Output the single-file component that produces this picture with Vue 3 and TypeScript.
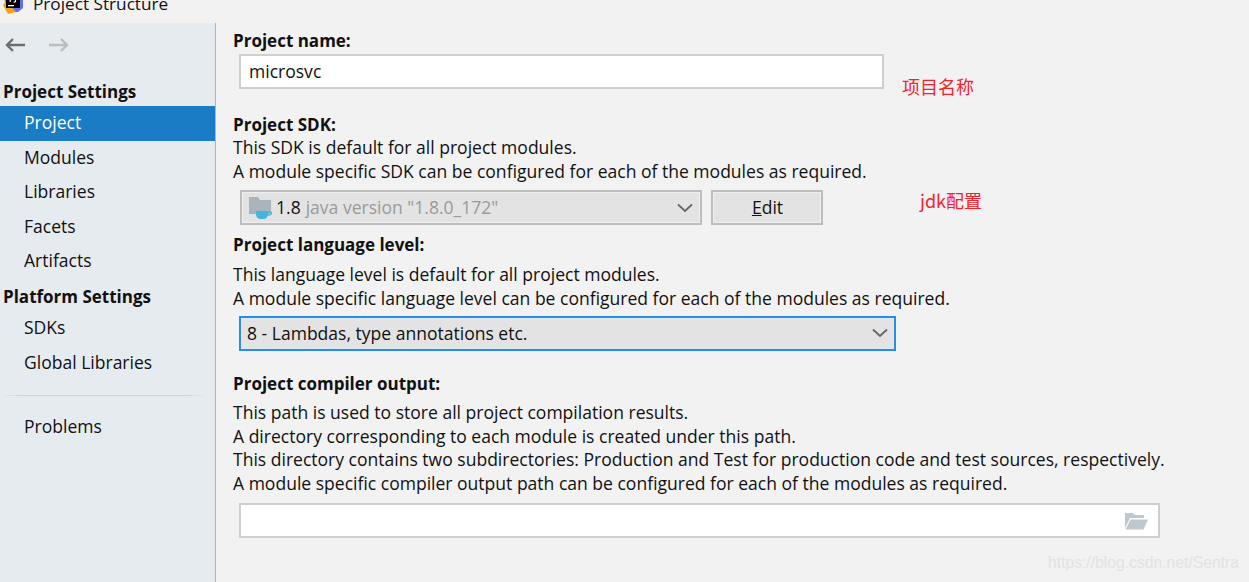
<template>
  <div class="window">
    <header class="titlebar">
      <svg class="app-logo" viewBox="0 0 20 20">
        <path d="M1 2 8 0v14L3 17z" fill="#fc4f8b" />
        <path d="M12 0h8v14l-5 4H8z" fill="#5f6ff0" />
        <path d="M0 11 5 20l8-2L3 7z" fill="#f9a11b" />
        <rect x="3" y="0" width="14" height="14" fill="#000" />
        <rect x="5" y="11" width="6" height="1.300" fill="#fff" />
        <path d="M5.500 2.500h3.500M7.200 2.500v5.500M12.500 2.500v4.500c0 1-1 1.300-2 1" stroke="#fff" stroke-width="1.200" fill="none" />
      </svg>
      <span class="title">Project Structure</span>
    </header>

    <div class="body">
      <aside class="sidebar">
        <div class="nav-arrows">
          <svg viewBox="0 0 22 16" class="arrow">
            <path d="M21 8H3M9 2 3 8l6 6" fill="none" stroke="#6e6e6e" stroke-width="2.400" />
          </svg>
          <svg viewBox="0 0 22 16" class="arrow">
            <path d="M1 8h18M13 2l6 6-6 6" fill="none" stroke="#bdbdbd" stroke-width="2.400" />
          </svg>
        </div>

        <div class="group-title first">Project Settings</div>
        <div
          v-for="item in projectItems"
          :key="item"
          class="nav-item"
          :class="{ active: item === 'Project' }"
        >
          {{ item }}
        </div>

        <div class="group-title">Platform Settings</div>
        <div v-for="item in platformItems" :key="item" class="nav-item">{{ item }}</div>

        <div class="nav-divider"></div>
        <div class="nav-item">Problems</div>
      </aside>

      <main class="content">
        <h3 class="label name-label">Project name:</h3>
        <div class="field name-field">microsvc</div>

        <h3 class="label sdk-label">Project SDK:</h3>
        <p class="desc sdk-first">This SDK is default for all project modules.</p>
        <p class="desc">A module specific SDK can be configured for each of the modules as required.</p>
        <div class="sdk-row">
          <div class="combo sdk-combo">
            <svg class="sdk-icon" viewBox="0 0 24 22">
              <path d="M0 0h9l2 3h11v14H0z" fill="#a9b5bc" />
              <path d="M7 14h12v3c0 3-2 5-5 5h-2c-3 0-5-2-5-5z" fill="#40b6e0" />
              <path d="M19 15h2.500c1.500 0 1.500 3-1 3H19" fill="none" stroke="#40b6e0" stroke-width="1.300" />
            </svg>
            <span class="sdk-version">1.8</span>
            <span class="sdk-detail">java version "1.8.0_172"</span>
            <svg class="chevron" viewBox="0 0 16 10">
              <path d="M1 1.500 8 8l7-6.500" fill="none" stroke="#666" stroke-width="1.800" />
            </svg>
          </div>
          <button class="edit-btn" type="button"><u>E</u>dit</button>
        </div>

        <h3 class="label level-label">Project language level:</h3>
        <p class="desc level-first">This language level is default for all project modules.</p>
        <p class="desc">A module specific language level can be configured for each of the modules as required.</p>
        <div class="combo level-combo">
          <span>8 - Lambdas, type annotations etc.</span>
          <svg class="chevron" viewBox="0 0 16 10">
            <path d="M1 1.500 8 8l7-6.500" fill="none" stroke="#666" stroke-width="1.800" />
          </svg>
        </div>

        <h3 class="label output-label">Project compiler output:</h3>
        <p class="desc output-first">This path is used to store all project compilation results.</p>
        <p class="desc">A directory corresponding to each module is created under this path.</p>
        <p class="desc">This directory contains two subdirectories: Production and Test for production code and test sources, respectively.</p>
        <p class="desc">A module specific compiler output path can be configured for each of the modules as required.</p>
        <div class="field output-field">
          <svg class="folder" viewBox="0 0 24 18">
            <path d="M1 1h8l2 2h9v3H6L1 16z" fill="#bfc8ce" />
            <path d="M6.500 7.500H24L19.500 17.500H1.500z" fill="#bfc8ce" />
          </svg>
        </div>

        <span class="note note-name">项目名称</span>
        <span class="note note-jdk">jdk配置</span>
      </main>
    </div>

    <span class="watermark">https://blog.csdn.net/Sentra</span>
  </div>
</template>

<script setup lang="ts">
const projectItems: string[] = ['Project', 'Modules', 'Libraries', 'Facets', 'Artifacts']
const platformItems: string[] = ['SDKs', 'Global Libraries']
</script>

<style>
html,
body {
  margin: 0;
  background: #f2f2f2;
}
</style>

<style scoped>
.window {
  position: relative;
  width: 1249px;
  height: 582px;
  overflow: hidden;
  background: #f2f2f2;
  color: #111;
  font-family: 'Open Sans', 'Noto Sans', sans-serif;
  font-size: 17.550px;
  line-height: 24px;
}

.titlebar {
  display: flex;
  align-items: flex-end;
  height: 23px;
  overflow: hidden;
  gap: 10px;
  padding-left: 3px;
}

.app-logo {
  width: 20px;
  height: 20px;
  margin-bottom: 9px;
  flex-shrink: 0;
}

.title {
  font-size: 17.200px;
  line-height: 20px;
  margin-bottom: 9px;
}

.body {
  display: flex;
  height: 559px;
}

.sidebar {
  width: 215px;
  flex-shrink: 0;
  background: #e6ebf0;
  border-right: 1px solid #b4b4b4;
}

.nav-arrows {
  display: flex;
  gap: 22px;
  padding: 14px 0 0 4px;
  height: 42px;
  box-sizing: border-box;
}

.arrow {
  width: 22px;
  height: 16px;
}

.group-title {
  font-size: 17px;
  font-weight: 700;
  padding-left: 3px;
  height: 32px;
  line-height: 36px;
}

.group-title.first {
  margin-top: 9px;
}

.nav-item {
  height: 34.600px;
  line-height: 33.500px;
  padding-left: 24px;
}

.nav-item.active {
  background: #1a7cc4;
  color: #fff;
}

.nav-divider {
  height: 1px;
  margin: 15px 8px 14px 0;
  background: linear-gradient(to right, #e6ebf0, #cfd2d5 10%, #cfd2d5 90%, #e6ebf0);
}

.content {
  position: relative;
  flex: 1;
  padding-left: 17px;
}

.label {
  margin: 0;
  font-size: 17px;
  font-weight: 700;
  line-height: 24px;
}

.desc {
  margin: 0;
  line-height: 23.500px;
}

.field {
  box-sizing: border-box;
  background: #fff;
  border: 2px solid #cfcfcf;
  margin-left: 6px;
}

.name-label {
  margin-top: 6px;
}

.name-field {
  width: 645px;
  height: 35px;
  margin-top: 1px;
  padding-left: 8px;
  line-height: 30px;
}

.sdk-label {
  margin-top: 24px;
}

.sdk-first {
  margin-top: -1px;
}

.sdk-row {
  display: flex;
  gap: 9px;
  margin: 7px 0 0 7px;
}

.combo {
  display: flex;
  align-items: center;
  box-sizing: border-box;
  background: #e3e3e3;
  height: 35px;
}

.sdk-combo {
  width: 462px;
  border: 2px solid #bdbdbd;
  box-shadow: inset 0 0 0 1px #f0f0f0;
  padding: 0 7px;
}

.sdk-icon {
  width: 24px;
  height: 22px;
  margin-right: 3px;
}

.sdk-version {
  margin-right: 5px;
}

.sdk-version,
.sdk-detail {
  position: relative;
  top: -1px;
}

.sdk-detail {
  color: #9a9a9a;
}

.chevron {
  width: 16px;
  height: 10px;
  margin-left: auto;
}

.edit-btn {
  width: 112px;
  height: 35px;
  box-sizing: border-box;
  background: #e3e3e3;
  border: 2px solid #bdbdbd;
  box-shadow: inset 0 0 0 1px #f0f0f0;
  color: #111;
  font: inherit;
  padding: 0 0 2px 1px;
}

.level-label {
  margin-top: 8px;
}

.level-first {
  margin-top: 6px;
}

.level-combo {
  width: 657px;
  margin: 6px 0 0 6px;
  border: 2px solid #2a8de2;
  box-shadow: inset 0 0 0 1px #dcebf7;
  padding: 0 6px 2px;
}

.output-label {
  margin-top: 21px;
}

.output-first {
  margin-top: 5px;
}

.output-field {
  display: flex;
  align-items: center;
  justify-content: flex-end;
  width: 921px;
  height: 35px;
  margin-top: 8px;
  padding-right: 10px;
}

.folder {
  width: 24px;
  height: 18px;
}

.note {
  position: absolute;
  color: #f5222d;
  font-family: 'Noto Sans CJK SC', 'Open Sans', sans-serif;
  font-size: 18px;
}

.note-name {
  left: 686px;
  top: 51px;
}

.note-jdk {
  left: 704px;
  top: 165px;
}

.watermark {
  position: absolute;
  left: 1048px;
  top: 553px;
  color: #e2e2e2;
  font-family: 'Liberation Sans', sans-serif;
  font-size: 15.700px;
  line-height: 20px;
}
</style>
